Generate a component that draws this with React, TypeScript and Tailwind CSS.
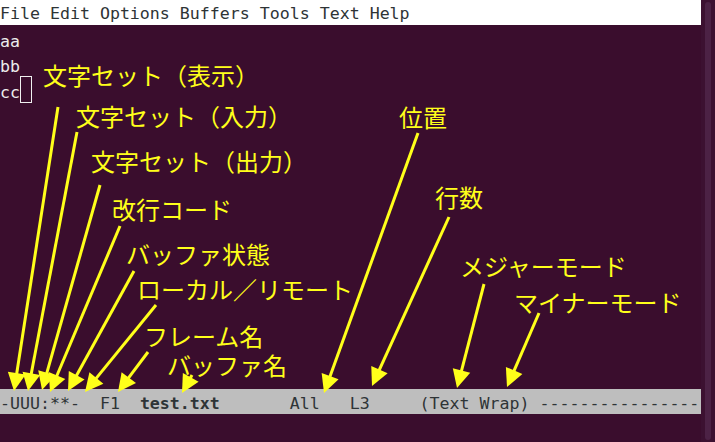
const modeLine = [
  { text: "-UUU:**-  F1  ", bold: false },
  { text: "test.txt", bold: true },
  { text: "       All   L3     (Text Wrap) ----------------", bold: false },
];

// label text, left, top
const labels: [string, number, number][] = [
  ["文字セット（表示）", 43, 65],
  ["文字セット（入力）", 76, 105.5],
  ["文字セット（出力）", 91, 150.5],
  ["改行コード", 112, 198.5],
  ["バッファ状態", 126, 243.5],
  ["ローカル／リモート", 137, 278.5],
  ["フレーム名", 144, 325.5],
  ["バッファ名", 167, 354.5],
  ["位置", 399, 107],
  ["行数", 435, 187],
  ["メジャーモード", 460, 256],
  ["マイナーモード", 514, 291.5],
];

// x1, y1 (tail) -> x2, y2 (tip)
const arrows: [number, number, number, number][] = [
  [58, 107, 14, 391],
  [77, 132, 28, 391],
  [100, 185, 42, 390],
  [120, 226, 50, 392],
  [134, 271, 68, 391],
  [156, 305, 85, 392],
  [148, 352, 118, 392],
  [192, 375, 182, 393],
  [418, 133, 324, 393],
  [449, 217, 372, 386],
  [484, 284, 457, 388],
  [539, 313, 507, 387],
];

function Arrow({ a }: { a: [number, number, number, number] }) {
  const [x1, y1, x2, y2] = a;
  const len = Math.hypot(x2 - x1, y2 - y1);
  const ux = (x2 - x1) / len;
  const uy = (y2 - y1) / len;
  const head = 18;
  const half = 9;
  const bx = x2 - ux * head;
  const by = y2 - uy * head;
  const pts = `${x2},${y2} ${bx - uy * half},${by + ux * half} ${bx + uy * half},${by - ux * half}`;
  return (
    <g>
      <line x1={x1} y1={y1} x2={bx + ux * 2} y2={by + uy * 2} stroke="#ffff1a" strokeWidth={3} />
      <polygon points={pts} fill="#ffff1a" />
    </g>
  );
}

export default function App() {
  return (
    <div className="relative flex w-[715px] h-[442px] overflow-hidden bg-[#3a0d2d]">
      <div className="flex w-[701px] flex-col font-['DejaVu_Sans_Mono',monospace] text-[16.6px]">
        <div className="h-[25px] overflow-hidden whitespace-pre bg-white leading-[28px] text-[#2e3436]">
          File Edit Options Buffers Tools Text Help
        </div>
        <div className="flex-1 pt-[3.5px] leading-[25.5px] text-[#ececec]">
          <div className="h-[25.5px]">aa</div>
          <div className="h-[25.5px]">bb</div>
          <div className="relative h-[25.5px]">
            cc
            <span className="absolute left-[20px] top-[-3.5px] h-[27px] w-[12px] border border-[#f0f0f0]" />
          </div>
        </div>
        <div className="h-[25px] overflow-hidden whitespace-pre bg-[#bebebe] leading-[30px] text-[#2e3436]">
          {modeLine.map((m, i) => (
            <span key={i} className={m.bold ? "font-bold" : ""}>
              {m.text}
            </span>
          ))}
        </div>
        <div className="h-[28px]" />
      </div>
      <div className="flex w-[14px] bg-[#3c1131] pl-[4px] py-[2px]">
        <div className="w-[6px] rounded-full bg-[#4c2245]" />
      </div>

      {labels.map(([t, x, y]) => (
        <div
          key={t}
          className="absolute whitespace-nowrap font-['Noto_Sans_CJK_JP',sans-serif] text-[24px] leading-[20px] text-[#ffff1a]"
          style={{ left: x, top: y }}
        >
          {t}
        </div>
      ))}

      <svg className="pointer-events-none absolute left-0 top-0" width={715} height={442} viewBox="0 0 715 442">
        {arrows.map((a, i) => (
          <Arrow key={i} a={a} />
        ))}
      </svg>
    </div>
  );
}
